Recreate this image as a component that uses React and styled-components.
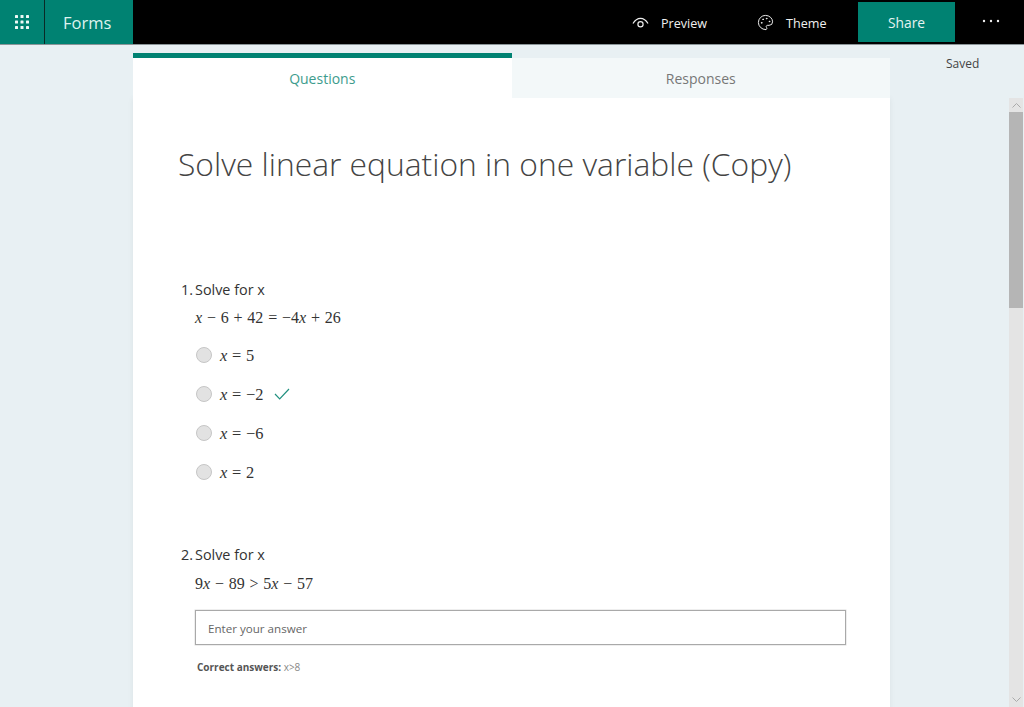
import React from "react";
import styled, { createGlobalStyle } from "styled-components";
import { Palette } from "lucide-react";

const Global = createGlobalStyle`
  html, body { margin: 0; height: 707px; overflow: hidden; background: #e8f0f3; }
  * { box-sizing: border-box; }
  body { font-family: "Open Sans", "Noto Sans", sans-serif; color: #333; }
`;
const Page = styled.div`position: relative; width: 1024px; height: 707px; overflow: hidden;`;
const Header = styled.header`
  display: flex; height: 45px; background: #000; border-bottom: 1px solid #8a9598; align-items: stretch;
`;
const Waffle = styled.div`
  width: 45px; background: #008272; border-right: 1px solid #0a2a26; display: flex; align-items: center; justify-content: center; padding-right: 1px;
`;
const Brand = styled.div`
  width: 88px; background: #008272; color: #dff3ef; font-size: 16.5px; line-height: 46px; padding-left: 18px;
`;
const Spacer = styled.div`flex: 1;`;
const HeadAction = styled.div`
  display: flex; align-items: center; gap: 12px; color: #f0f0f0; font-size: 12.6px; width: ${p => p.$w}px; padding-top: 1px;
`;
const ActionLabel = styled.span`padding-top: 2px;`;
const ShareButton = styled.div`
  width: 97px; height: 40px; margin-top: 2px; background: #008272; color: #e6f4f1; font-size: 13.8px;
  display: flex; align-items: center; justify-content: center;
`;
const More = styled.div`width: 69px; display: flex; align-items: center; justify-content: center; padding: 0 0 2px 2px;`;
const Body = styled.div`display: flex; padding: 8px 0 0 133px;`;
const Column = styled.main`width: 757px;`;
const Tabs = styled.nav`display: flex; height: 45px;`;
const Tab = styled.div`
  width: 50%; display: flex; align-items: center; justify-content: center; font-size: 14px;
  ${p => p.$active
    ? `background:#fff;color:#3d9c8d;border-top:5px solid #008272;`
    : `margin-top:5px;background:#f3f8f9;color:#777;`}
`;
const Card = styled.section`
  background: #fff; height: 620px; padding: 43px 45px 0; box-shadow: 0 0 6px rgba(0,0,0,.06);
`;
const Title = styled.h1`
  margin: 0; font-weight: 300; font-size: 31.8px; line-height: 46px; color: #444; white-space: nowrap;
`;
const Question = styled.div`margin-top: ${p => p.$mt}px;`;
const QTitle = styled.div`display: flex; font-size: 14.4px; line-height: 20px; color: #333; padding-left: 3px;`;
const QNum = styled.span`width: 14px;`;
const Math = styled.div`
  font-family: "Liberation Serif", serif; font-size: 16.4px; word-spacing: .6px; line-height: 20px; color: #333; white-space: pre;
  i { font-style: italic; }
`;
const Equation = styled(Math)`margin: ${p => p.$mt}px 0 0 17px; font-size: 16px; word-spacing: .8px;`;
const Options = styled.div`display: flex; flex-direction: column; margin: 8px 0 0 18px;`;
const Option = styled.div`display: flex; align-items: center; height: 39px; padding-bottom: 2px;`;
const Radio = styled.span`
  width: 16px; height: 16px; border-radius: 50%; background: #e2e2e2; border: 1.5px solid #c6c6c6; margin-right: 8px;
`;
const OptionText = styled(Math)`padding-top: 2px;`;
const Check = styled.svg`margin-left: 11px;`;
const AnswerBox = styled.div`
  margin: 16px 0 0 17px; width: 651px; height: 35px; border: 1px solid #a9a9a9; box-shadow: 0 0 0 .5px #ddd;
  font-size: 11.6px; line-height: 35px; padding-left: 12px; color: #666;
`;
const Correct = styled.div`
  margin: 15px 0 0 19px; font-size: 10px; line-height: 14px; color: #888;
  b { color: #555; font-weight: 700; }
`;
const Saved = styled.div`margin-left: 56px; font-size: 12px; line-height: 18px; color: #444; padding-top: 2px;`;
const Scrollbar = styled.div`
  position: absolute; right: 1px; top: 98px; bottom: 0; width: 14px; background: #e4e4e4;
  display: flex; flex-direction: column; align-items: center;
`;
const Arrow = styled.svg`flex: none; margin: 5px 0 4px;`;
const Thumb = styled.div`width: 14px; height: 196px; background: #b5b5b5; flex: none;`;
const Down = styled(Arrow)`margin: auto 0 5px;`;

const Dots = () => (
  <svg width="14" height="14" viewBox="0 0 14 14" fill="#eef8f6">
    {[1.5, 7, 12.5].flatMap(y => [1.5, 7, 12.5].map(x => <rect key={`${x}-${y}`} x={x - 1.5} y={y - 1.5} width="3" height="3" rx=".6" />))}
  </svg>
);
const EyeIcon = () => (
  <svg width="17" height="12" viewBox="0 0 17 12" fill="none" stroke="#eee" strokeWidth="1.2">
    <path d="M1 6.5C3 3 5.5 1.3 8.5 1.3S14 3 16 6.5" />
    <circle cx="8.5" cy="7.3" r="2.6" />
  </svg>
);
const Ellipsis = () => (
  <svg width="18" height="4" viewBox="0 0 18 4" fill="#eee">
    <circle cx="2" cy="2" r="1.2" /><circle cx="9" cy="2" r="1.2" /><circle cx="16" cy="2" r="1.2" />
  </svg>
);
const CheckIcon = () => (
  <Check width="16" height="12" viewBox="0 0 16 12" fill="none" stroke="#21907f" strokeWidth="1.2">
    <path d="M1 6l4.7 4.8L15 1" />
  </Check>
);

const options = [
  ["5", false],
  ["−2", true],
  ["−6", false],
  ["2", false],
];

export default function App() {
  return (
    <Page>
      <Global />
      <Header>
        <Waffle><Dots /></Waffle>
        <Brand>Forms</Brand>
        <Spacer />
        <HeadAction $w={125}><EyeIcon /><ActionLabel>Preview</ActionLabel></HeadAction>
        <HeadAction $w={101}><Palette size={17} strokeWidth={1.4} color="#eee" /><ActionLabel>Theme</ActionLabel></HeadAction>
        <ShareButton>Share</ShareButton>
        <More><Ellipsis /></More>
      </Header>
      <Body>
        <Column>
          <Tabs>
            <Tab $active>Questions</Tab>
            <Tab>Responses</Tab>
          </Tabs>
          <Card>
            <Title>Solve linear equation in one variable (Copy)</Title>
            <Question $mt={93}>
              <QTitle><QNum>1.</QNum>Solve for x</QTitle>
              <Equation $mt={8}><i>x</i> − 6 + 42 = −4<i>x</i> + 26</Equation>
              <Options>
                {options.map(([v, ok]) => (
                  <Option key={v}>
                    <Radio />
                    <OptionText><i>x</i> = {v}</OptionText>
                    {ok && <CheckIcon />}
                  </Option>
                ))}
              </Options>
            </Question>
            <Question $mt={53}>
              <QTitle><QNum>2.</QNum>Solve for x</QTitle>
              <Equation $mt={9}>9<i>x</i> − 89 &gt; 5<i>x</i> − 57</Equation>
              <AnswerBox>Enter your answer</AnswerBox>
              <Correct><b>Correct answers:</b> x&gt;8</Correct>
            </Question>
          </Card>
        </Column>
        <Saved>Saved</Saved>
      </Body>
      <Scrollbar>
        <Arrow width="9" height="5" viewBox="0 0 9 5" fill="none" stroke="#aaa"><path d="M.5 4.5l4-4 4 4" /></Arrow>
        <Thumb />
        <Down width="9" height="5" viewBox="0 0 9 5" fill="none" stroke="#aaa"><path d="M.5.5l4 4 4-4" /></Down>
      </Scrollbar>
    </Page>
  );
}
